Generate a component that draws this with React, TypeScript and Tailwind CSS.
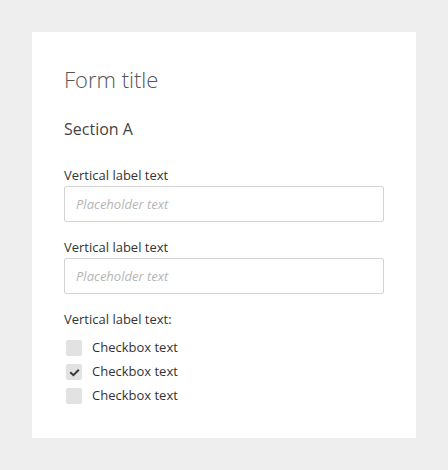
import React from 'react';

function Field({ label }: { label: string }) {
  return (
    <div className="flex flex-col">
      <label className="text-[13px] leading-[18px] text-[#333]">{label}</label>
      <input
        type="text"
        placeholder="Placeholder text"
        className="mt-[2px] h-[36px] w-[320px] rounded-[2px] border border-[#d4d4d4] bg-white px-[11px] text-[13px] text-[#333] placeholder:italic placeholder:text-[#b5b5b5] outline-none"
      />
    </div>
  );
}

function Check({ checked }: { checked?: boolean }) {
  return (
    <label className="flex h-[24px] items-center">
      <span className="ml-[2px] flex h-[16px] w-[16px] items-center justify-center rounded-[2px] bg-[#e2e2e2]">
        {checked && (
          <svg width="11" height="9" viewBox="0 0 11 9" fill="none">
            <path d="M1.2 4.2 L4.4 7.2 L9.8 1.8" stroke="#3a3a3a" strokeWidth="2" />
          </svg>
        )}
      </span>
      <span className="ml-[10px] text-[13px] text-[#333]">Checkbox text</span>
    </label>
  );
}

export default function App() {
  return (
    <div
      className="min-h-[470px] bg-[#eeeeee] p-[32px]"
      style={{ fontFamily: '"Open Sans", sans-serif' }}
    >
      <div className="w-[384px] bg-white px-[32px] pt-[33px] pb-[30px]">
        <h1 className="text-[22px] font-light leading-[28px] text-[#555]">Form title</h1>
        <h2 className="mt-[25px] text-[16px] leading-[22px] text-[#444]">Section A</h2>

        <div className="mt-[26px] flex flex-col gap-[16px]">
          <Field label="Vertical label text" />
          <Field label="Vertical label text" />
        </div>

        <div className="mt-[16px]">
          <p className="text-[13px] leading-[18px] text-[#333]">Vertical label text:</p>
          <div className="mt-[8px] flex flex-col">
            <Check />
            <Check checked />
            <Check />
          </div>
        </div>
      </div>
    </div>
  );
}
